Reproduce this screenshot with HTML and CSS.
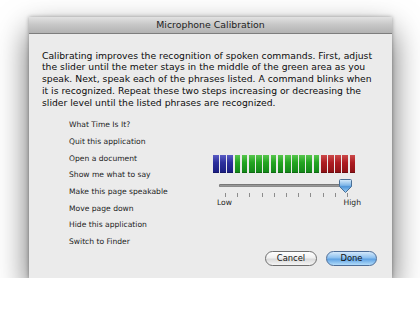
FILE: index.html
```html
<!DOCTYPE html>
<html>
<head>
<meta charset="utf-8">
<link rel="stylesheet" href="styles.css">
</head>
<body>
<div class="window">
  <div class="titlebar">Microphone Calibration</div>
  <div class="content">
    <p class="intro">Calibrating improves the recognition of spoken commands. First, adjust the slider until the meter stays in the middle of the green area as you speak. Next, speak each of the phrases listed. A command blinks when it is recognized. Repeat these two steps increasing or decreasing the slider level until the listed phrases are recognized.</p>
    <div class="main">
      <ul class="phrases">
        <li>What Time Is It?</li>
        <li>Quit this application</li>
        <li>Open a document</li>
        <li>Show me what to say</li>
        <li>Make this page speakable</li>
        <li>Move page down</li>
        <li>Hide this application</li>
        <li>Switch to Finder</li>
      </ul>
      <div class="level">
        <div class="meter">
          <span class="bar blue"></span><span class="bar blue"></span><span class="bar blue"></span>
          <span class="bar green"></span><span class="bar green"></span><span class="bar green"></span><span class="bar green"></span>
          <span class="bar green"></span><span class="bar green"></span><span class="bar green"></span><span class="bar green"></span>
          <span class="bar green"></span><span class="bar green"></span><span class="bar green"></span><span class="bar green"></span>
          <span class="bar red"></span><span class="bar red"></span><span class="bar red"></span><span class="bar red"></span><span class="bar red"></span>
        </div>
        <div class="slider">
          <div class="track"></div>
          <svg class="knob" width="13" height="14" viewBox="0 0 13 14">
            <defs>
              <linearGradient id="kg" x1="0" y1="0" x2="0" y2="1">
                <stop offset="0" stop-color="#d8ecfb"/>
                <stop offset="0.45" stop-color="#7fb6e8"/>
                <stop offset="0.55" stop-color="#4f95d8"/>
                <stop offset="1" stop-color="#9fd0f5"/>
              </linearGradient>
            </defs>
            <path d="M1.5 0.5 H11.5 Q12.5 0.5 12.5 1.5 V7.5 L6.5 13.5 L0.5 7.5 V1.5 Q0.5 0.5 1.5 0.5 Z" fill="url(#kg)" stroke="#4a6f95" stroke-width="1"/>
          </svg>
        </div>
        <div class="ticks">
          <i></i><i></i><i></i><i></i><i></i><i></i><i></i><i></i><i></i><i></i><i></i>
        </div>
        <div class="labels"><span>Low</span><span>High</span></div>
      </div>
    </div>
    <div class="buttons">
      <button class="btn cancel">Cancel</button>
      <button class="btn done">Done</button>
    </div>
  </div>
</div>
</body>
</html>
```
FILE: styles.css
```css
html, body {
  margin: 0;
  padding: 0;
  background: #ffffff;
}
body {
  padding-top: 17px;
  padding-left: 29px;
  font-family: "DejaVu Sans", "Liberation Sans", sans-serif;
  color: #1a1a1a;
}
.window {
  width: 363px;
  height: 261px;
  background: #ebebeb;
  box-shadow: 0 14px 30px rgba(0,0,0,0.6), 0 0 4px rgba(0,0,0,0.35);
  display: flex;
  flex-direction: column;
}
.titlebar {
  height: 16px;
  line-height: 16px;
  text-align: center;
  font-size: 9.4px;
  color: #222;
  background: linear-gradient(#e2e2e2, #c6c6c6 50%, #b2b2b2);
  border-bottom: 1px solid #7d7d7d;
  flex: none;
}
.content {
  padding: 15.5px 15px 0 13px;
  flex: 1;
  display: flex;
  flex-direction: column;
}
.intro {
  margin: 0;
  font-size: 9.24px;
  line-height: 11.75px;
  color: #0c0c0c;
}
.main {
  display: flex;
  margin-top: 9px;
}
.phrases {
  list-style: none;
  margin: 0 0 0 27px;
  padding: 0;
  width: 144px;
  font-size: 7.6px;
  line-height: 16.7px;
  color: #1e1e1e;
}
.level {
  padding-top: 37.5px;
  width: 150px;
}
.meter {
  display: flex;
  gap: 1.5px;
  height: 18px;
}
.bar {
  width: 5.7px;
  flex: none;
  box-sizing: border-box;
}
.blue { background: linear-gradient(#5a5cc4, #2c2f9c 45%, #1c1f82); border-bottom: 1px solid #15176a; }
.green { background: linear-gradient(#58c64e, #22a421 45%, #14891a); border-bottom: 1px solid #0f6a12; }
.red { background: linear-gradient(#cc4a4a, #ad1c22 45%, #8f1216); border-bottom: 1px solid #6e0c10; }
.slider {
  position: relative;
  height: 14px;
  margin-top: 6px;
  margin-left: 6px;
  width: 128px;
}
.track {
  position: absolute;
  left: 0;
  right: 0;
  top: 5px;
  height: 3px;
  border-radius: 2px;
  background: linear-gradient(#7a7a7a, #b5b5b5);
  box-shadow: inset 0 0 0 0.5px #6c6c6c;
}
.knob {
  position: absolute;
  left: 119.5px;
  top: 0;
}
.ticks {
  display: flex;
  justify-content: space-between;
  width: 123px;
  margin-left: 12px;
  height: 4px;
  margin-top: 0;
}
.ticks i {
  width: 1px;
  height: 4px;
  background: #8c8c8c;
}
.labels {
  display: flex;
  justify-content: space-between;
  width: 144px;
  margin-left: 4px;
  margin-top: 1px;
  font-size: 7.6px;
  line-height: 10px;
  color: #1e1e1e;
}
.buttons {
  display: flex;
  justify-content: flex-end;
  gap: 9px;
  margin-top: 0.5px;
}
.btn {
  font-family: "DejaVu Sans", "Liberation Sans", sans-serif;
  font-size: 8.4px;
  height: 15px;
  padding: 0;
  border-radius: 8px;
  color: #111;
  line-height: 13px;
}
.cancel {
  width: 52px;
  border: 1px solid #6f6f6f;
  background: linear-gradient(#ffffff, #f0f0f0 45%, #dadada 55%, #f5f5f5);
}
.done {
  width: 51px;
  border: 1px solid #4d6d98;
  background: linear-gradient(#d5e9fb, #8cc0ef 45%, #5fa2e3 55%, #b2dcfa);
}
```
